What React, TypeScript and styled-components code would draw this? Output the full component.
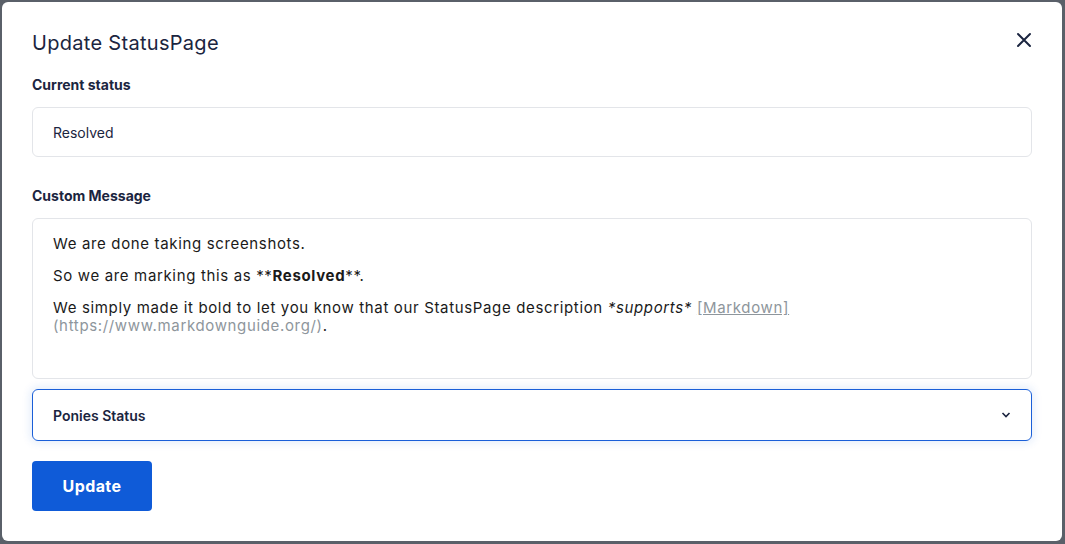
import React from "react";
import styled, { createGlobalStyle } from "styled-components";

const Global = createGlobalStyle`
  html, body { margin: 0; padding: 0; }
  body {
    width: 1065px;
    height: 544px;
    overflow: hidden;
    background: #5a6069;
    font-family: "Inter", "Liberation Sans", sans-serif;
  }
  * { box-sizing: border-box; }
`;

const Overlay = styled.div`
  width: 1065px;
  height: 544px;
  padding: 2px 3px 3px 2px;
  display: flex;
`;

const Modal = styled.div`
  flex: 1;
  background: #ffffff;
  border-radius: 6px;
  padding: 28px 30px 0 30px;
  display: flex;
  flex-direction: column;
  color: #1b2540;
`;

const Header = styled.div`
  display: flex;
  justify-content: space-between;
  align-items: flex-start;
  height: 47px;
`;

const Title = styled.h2`
  margin: 0;
  margin-top: 1px;
  font-size: 20px;
  font-weight: 400;
  color: #1b2540;
  letter-spacing: 0.3px;
`;

const CloseButton = styled.button`
  border: none;
  background: none;
  padding: 0;
  margin-top: 2px;
  width: 16px;
  height: 16px;
  display: flex;
  cursor: pointer;
`;

const Label = styled.div`
  font-size: 14px;
  font-weight: 700;
  color: #1b2540;
  line-height: 16px;
  padding-bottom: 14px;
`;

const Field = styled.div<{ $focused?: boolean; $height: number }>`
  height: ${(p) => p.$height}px;
  border: 1px solid ${(p) => (p.$focused ? "#1a5fd8" : "#e3e5e9")};
  border-radius: 6px;
  box-shadow: ${(p) => (p.$focused ? "0 0 8px 2px rgba(26,95,216,0.12)" : "none")};
  padding: 0 20px;
  display: flex;
  align-items: center;
  justify-content: space-between;
  font-size: 14px;
  color: #1b2540;
`;

const TextArea = styled.div`
  height: 161px;
  border: 1px solid #e3e5e9;
  border-radius: 6px;
  padding: 16px 20px;
  font-size: 15px;
  letter-spacing: 0.65px;
  color: #1a1a1a;
  line-height: 18px;
  margin-bottom: 10px;
`;

const Para = styled.p`
  margin: 0 0 14px 0;
`;

const Muted = styled.span`
  color: #8e969c;
`;

const LinkText = styled.span`
  color: #8e969c;
  text-decoration: underline;
`;

const SelectText = styled.span`
  font-weight: 600;
`;

const Section = styled.div<{ $gap: number }>`
  margin-bottom: ${(p) => p.$gap}px;
`;

const UpdateButton = styled.button`
  margin-top: 20px;
  width: 120px;
  height: 50px;
  border: none;
  border-radius: 4px;
  background: #0f5bd8;
  color: #ffffff;
  font-family: inherit;
  font-size: 16px;
  letter-spacing: 0.4px;
  font-weight: 700;
  cursor: pointer;
`;

export default function App() {
  return (
    <>
      <Global />
      <Overlay>
        <Modal>
          <Header>
            <Title>Update StatusPage</Title>
            <CloseButton aria-label="Close">
              <svg width="16" height="16" viewBox="0 0 16 16">
                <path d="M2 2 L14 14 M14 2 L2 14" stroke="#1b2540" strokeWidth="2" strokeLinecap="round" />
              </svg>
            </CloseButton>
          </Header>
          <Label>Current status</Label>
          <Section $gap={31}>
            <Field $height={50}>Resolved</Field>
          </Section>
          <Label>Custom Message</Label>
          <TextArea>
            <Para>We are done taking screenshots.</Para>
            <Para>
              So we are marking this as **<b>Resolved</b>**.
            </Para>
            <Para>
              We simply made it bold to let you know that our StatusPage description <i>*supports*</i>{" "}
              <LinkText>[Markdown]</LinkText> <Muted>(https://www.markdownguide.org/)</Muted>.
            </Para>
          </TextArea>
          <Field $focused $height={52}>
            <SelectText>Ponies Status</SelectText>
            <svg width="10" height="6" viewBox="0 0 10 6">
              <path d="M1.5 1 L5 4.5 L8.5 1" stroke="#1b2540" strokeWidth="1.6" fill="none" />
            </svg>
          </Field>
          <div>
            <UpdateButton>Update</UpdateButton>
          </div>
        </Modal>
      </Overlay>
    </>
  );
}
